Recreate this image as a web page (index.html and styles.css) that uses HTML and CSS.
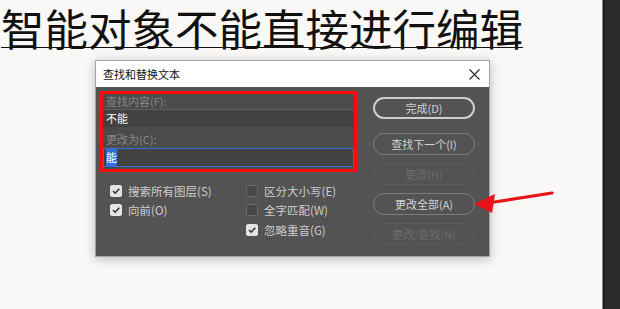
FILE: index.html
```html
<!DOCTYPE html>
<html lang="zh">
<head>
    <meta charset="UTF-8">
    <title>查找和替换文本</title>
    <link rel="stylesheet" href="styles.css">
</head>
<body>
    <div class="workspace">
        <div class="canvas">
            <h1 class="title">智能对象不能直接进行编辑</h1>

            <div class="dialog">
                <div class="dialog-head">
                    <span>查找和替换文本</span>
                    <svg class="close" width="11" height="11" viewBox="0 0 11 11">
                        <path d="M0.5 0.5 L10.5 10.5 M10.5 0.5 L0.5 10.5" stroke="#222" stroke-width="1.1" fill="none"/>
                    </svg>
                </div>

                <div class="dialog-body">
                    <div class="left">
                        <div class="fields">
                            <div class="field-label">查找内容(F):</div>
                            <div class="field-input">不能</div>
                            <div class="field-label second">更改为(C):</div>
                            <div class="field-input focused"><span class="selected">能</span></div>
                        </div>

                        <div class="options">
                            <label class="option"><span class="box checked"></span>搜索所有图层(S)</label>
                            <label class="option"><span class="box"></span>区分大小写(E)</label>
                            <label class="option"><span class="box checked"></span>向前(O)</label>
                            <label class="option"><span class="box"></span>全字匹配(W)</label>
                            <span></span>
                            <label class="option"><span class="box checked"></span>忽略重音(G)</label>
                        </div>
                    </div>

                    <div class="buttons">
                        <button class="btn default">完成(D)</button>
                        <button class="btn">查找下一个(I)</button>
                        <button class="btn disabled">更改(H)</button>
                        <button class="btn">更改全部(A)</button>
                        <button class="btn disabled">更改/查找(N)</button>
                    </div>
                </div>
            </div>
        </div>
        <div class="side-panel"></div>
    </div>

    <!-- стрелка-подсказка поверх окна -->
    <svg class="arrow" width="620" height="309" viewBox="0 0 620 309">
        <path d="M552 193 L488 203" stroke="#e8141b" stroke-width="3.2" stroke-linecap="round" fill="none"/>
        <path d="M474 204 L495 194 L492 213 Z" fill="#e8141b"/>
    </svg>
</body>
</html>
```

FILE: styles.css
```css
body {
    margin: 0;
    height: 309px;
    overflow: hidden;
    background: #f9f8f6;
    font-family: "Noto Sans CJK SC", "Noto Sans", sans-serif;
}
.workspace {
    display: flex;
    height: 100%;
}
.canvas {
    flex: 1;
    display: flex;
    flex-direction: column;
}
.title {
    margin: 0;
    padding-left: 1px;
    height: 52px;
    font-size: 43.5px;
    line-height: 52px;
    font-weight: normal;
    color: #111;
    text-decoration: underline;
    text-decoration-thickness: 1px;
    white-space: nowrap;
    position: relative;
    top: 2px;
}
.side-panel {
    width: 17px;
    background: #2a2a2a;
    border-left: 1px solid #8a8a8a;
    box-shadow: inset 2px 0 0 #1c1c1c;
}

/* окно диалога */
.dialog {
    margin: 8px 0 0 95px;
    width: 393px;
    border: 1px solid #a4a4a4;
    box-shadow: 0 2px 10px rgba(0, 0, 0, 0.25);
    background: #535353;
}
.dialog-head {
    height: 26px;
    background: white;
    display: flex;
    align-items: center;
    justify-content: space-between;
    padding: 0 9px 0 7px;
    font-size: 11px;
    color: #111;
}
.close {
    display: block;
}
.dialog-body {
    display: flex;
    padding: 4px 14px 11px 4px;
    gap: 16px;
}
.left {
    width: 257px;
}
.fields {
    border: 3px solid #ff0a0a;
    background: #4b4b4b;
    padding-bottom: 2px;
}
.field-label {
    height: 15px;
    line-height: 15px;
    padding-left: 3px;
    font-size: 11px;
    color: #868686;
}
.field-label.second {
    height: 21px;
    line-height: 25px;
}
.field-input {
    height: 17px;
    line-height: 17px;
    padding-left: 3px;
    font-size: 11px;
    color: #f2f2f2;
    background: #424242;
    border-top: 1px solid #5f5f5f;
}
.field-input.focused {
    height: 17px;
    border: 1px solid #2d6fd2;
    padding-left: 2px;
}
.selected {
    background: #2f70d6;
    color: white;
    padding: 1px 0;
}

/* флажки */
.options {
    display: grid;
    grid-template-columns: 136px auto;
    grid-auto-rows: 19.5px;
    margin-top: 9px;
    padding-left: 10px;
}
.option {
    display: flex;
    align-items: center;
    font-size: 11.5px;
    color: #cdcdcd;
}
.box {
    width: 10px;
    height: 10px;
    margin-right: 6px;
    border: 1px solid #6a6a6a;
    border-radius: 2px;
    background: #474747;
}
.box.checked {
    border-color: #e4e4e4;
    background: #e4e4e4 url("data:image/svg+xml,%3Csvg xmlns='http://www.w3.org/2000/svg' width='10' height='10'%3E%3Cpath d='M2 5 L4.2 7.2 L8.3 2.8' stroke='%23333' stroke-width='1.6' fill='none'/%3E%3C/svg%3E") center no-repeat;
}

/* кнопки */
.buttons {
    display: flex;
    flex-direction: column;
    gap: 8px;
    padding-top: 6px;
}
.btn {
    width: 102px;
    height: 22px;
    border-radius: 11px;
    border: 1.5px solid #7c7c7c;
    background: transparent;
    color: #d2d2d2;
    font-family: "Noto Sans CJK SC", "Noto Sans", sans-serif;
    font-size: 11px;
    padding: 0;
}
.btn.default {
    border: 2px solid #cfcfcf;
    margin-bottom: 6px;
}
.btn.disabled {
    border-color: #5c5c5c;
    color: #6c6c6c;
}
.arrow {
    position: absolute;
    top: 0;
    left: 0;
    pointer-events: none;
}
```
